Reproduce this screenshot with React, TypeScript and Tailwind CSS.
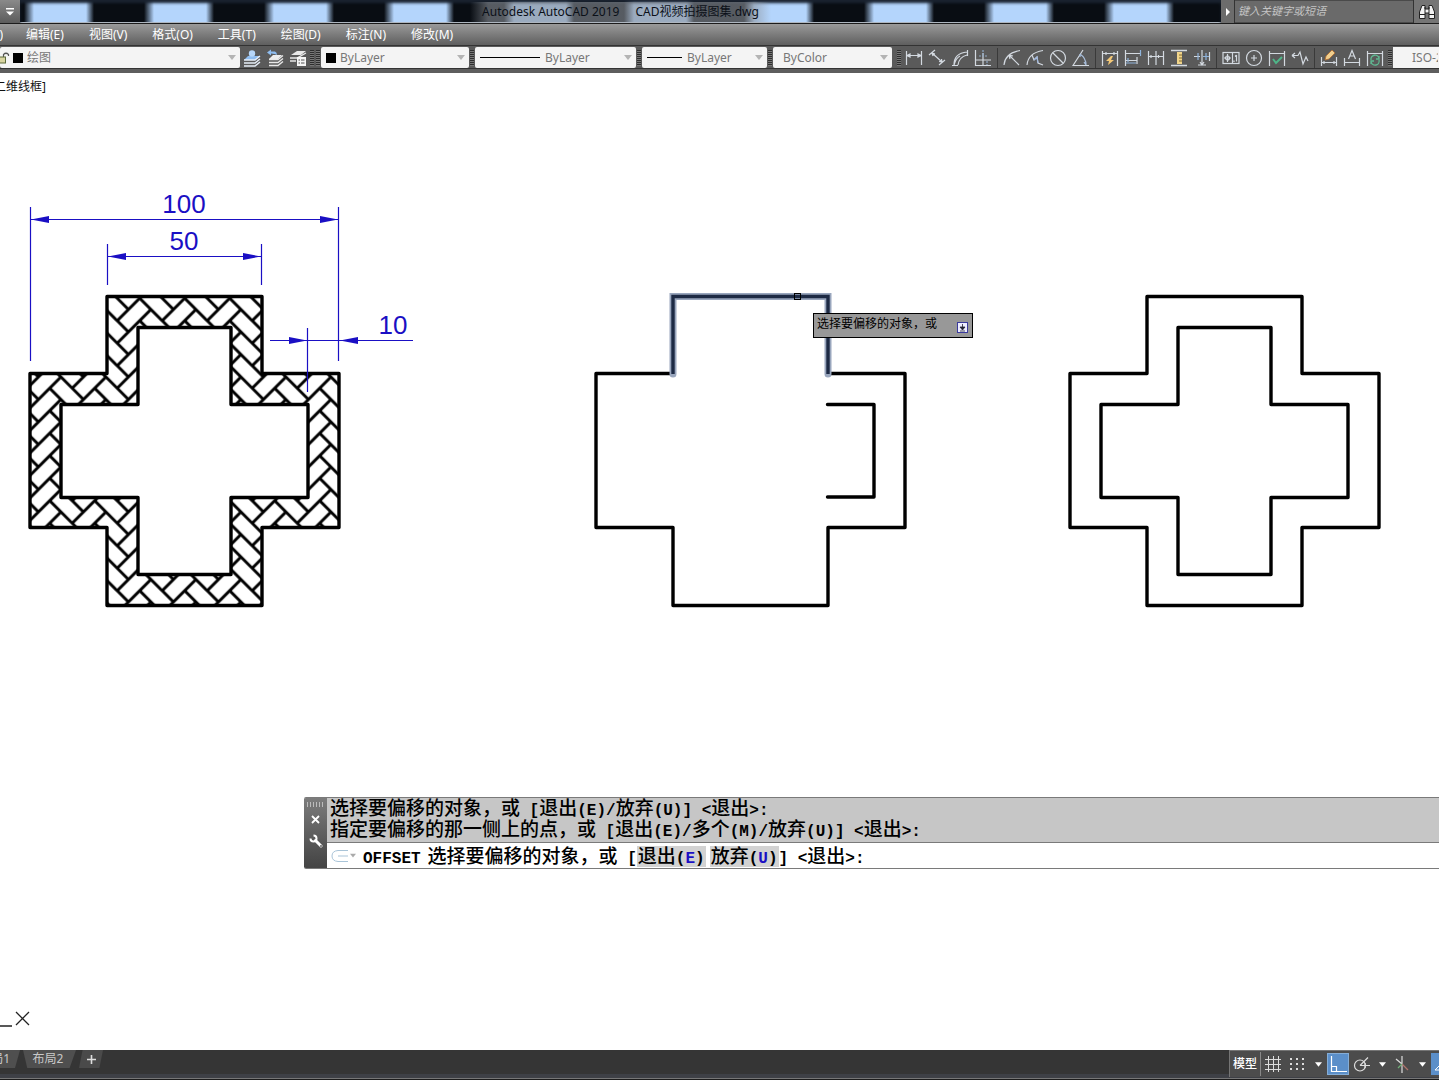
import React from "react";

const menus = ["编辑(E)", "视图(V)", "格式(O)", "工具(T)", "绘图(D)", "标注(N)", "修改(M)"];

const outer = "M77 0H232V77H309V231H232V309H77V231H0V77H77Z";
const inner = "M108 31H201V108H278V201H201V278H108V201H31V108H108Z";

const Icon = ({ children }: { children: React.ReactNode }) => (
  <svg
    width="18"
    height="18"
    viewBox="0 0 18 18"
    fill="none"
    stroke="#d3d9e0"
    strokeWidth="1.2"
    aria-hidden="true"
  >
    {children}
  </svg>
);

const ToolButton = ({ label, children }: { label: string; children: React.ReactNode }) => (
  <button aria-label={label} title={label} className="w-[23px] h-5 shrink-0 flex items-center justify-center">
    <Icon>{children}</Icon>
  </button>
);

const Arrow = ({ className }: { className: string }) => (
  <svg width="8" height="5" viewBox="0 0 8 5" className={className} aria-hidden="true">
    <path d="M0 0H8L4 5Z" fill="currentColor" />
  </svg>
);

const Grip = () => (
  <span className="w-1 h-4 mx-px shrink-0 bg-[repeating-linear-gradient(#2e2e2e_0_1px,#777_1px_2px)]" />
);

const Divider = () => <span className="w-px h-5 ml-[3px] mr-[2px] shrink-0 bg-[#8a8a8a] border-l border-[#3a3a3a]" />;

const Combo = ({
  label,
  value,
  className,
  children,
}: {
  label: string;
  value: string;
  className: string;
  children?: React.ReactNode;
}) => (
  <div className={`h-[21px] shrink-0 flex items-center bg-[#f4f4f4] rounded-xs text-[#777] ${className}`}>
    {children}
    <select aria-label={label} className="appearance-none flex-1 min-w-0 h-full leading-4 bg-transparent outline-none">
      <option>{value}</option>
    </select>
    <Arrow className="text-[#b4b4b4] mr-1" />
  </div>
);

// chinese glyphs and code characters use their own size so two latin columns equal one chinese column
const Cmd = ({ text }: { text: string }) => (
  <>
    {(text.match(/[\x20-\x7e]+|[^\x20-\x7e]+/g) ?? []).map((run, i) =>
      /[\x20-\x7e]/.test(run) ? (
        <span key={i} className="font-['Liberation_Mono',monospace] font-bold text-base leading-none whitespace-pre">
          {run}
        </span>
      ) : (
        <span key={i}>{run}</span>
      )
    )}
  </>
);

const CmdOption = ({ name, hotkey }: { name: string; hotkey: string }) => (
  <button className="h-[21px] px-px pb-[3px] bg-[#d2d2d2]">
    <Cmd text={`${name}(`} />
    <span className="font-['Liberation_Mono',monospace] font-bold text-base leading-none text-[#1a0fc4]">{hotkey}</span>
    <Cmd text=")" />
  </button>
);

const TitleBar = () => (
  <header className="h-6 flex items-stretch border-b border-[#1c1c1c] bg-[repeating-linear-gradient(90deg,#090d13_0_24px,#b4d5fc_34px_86px,#090d13_94px_120px)]">
    <button
      aria-label="自定义快速访问工具栏"
      className="w-5 flex items-center justify-center bg-linear-to-b from-[#8a8a8a] to-[#5c5c5c] text-white"
    >
      <svg width="8" height="8" viewBox="0 0 8 8" aria-hidden="true">
        <path d="M0 0H8V1.4H0ZM0 3.4H8L4 7.4Z" fill="currentColor" />
      </svg>
    </button>
    <div className="flex-1 flex justify-center items-center shadow-[inset_0_3px_3px_#1a2330,inset_0_-1px_0_#aeb6c0]">
      <h1 className="h-5 px-3 text-xs leading-5 text-[#0b1018] whitespace-pre bg-[linear-gradient(90deg,transparent,#8a8f9699_6%,#8a8f9699_94%,transparent)]">
        <span className="mr-4">Autodesk AutoCAD 2019</span>
        <span>CAD视频拍摄图集.dwg</span>
      </h1>
    </div>
    <div className="w-[218px] flex bg-[#6c6c6c]">
      <button aria-label="展开搜索" className="w-[14px] flex items-center justify-center border-r border-[#333]">
        <svg width="4" height="8" viewBox="0 0 4 8" aria-hidden="true">
          <path d="M0 0L4 4L0 8Z" fill="#fff" />
        </svg>
      </button>
      <input
        aria-label="搜索"
        placeholder="键入关键字或短语"
        className="flex-1 min-w-0 px-[3px] text-[11px] italic bg-[#6a6a6a] border-y border-[#4a4a4a] placeholder:text-[#c4c4c4] outline-none"
      />
      <button aria-label="查找" className="w-[26px] flex items-center justify-center border-l border-[#333] bg-[#757575]">
        <svg width="18" height="16" viewBox="0 0 18 16" fill="#f2f2f2" stroke="#222" aria-hidden="true">
          <path d="M4 1.5H7V5H11V1.5H14L16.5 8V14.5H11V9H7V14.5H1.5V8Z" />
          <path d="M2 10.500H7M11 10.500H16M7 3V9M11 3V9" />
        </svg>
      </button>
    </div>
  </header>
);

const MenuBar = () => (
  <nav className="h-[21px] flex items-center overflow-hidden bg-linear-to-b from-[#9a9a9a] to-[#5f5f5f] text-xs text-white">
    <button className="w-[3px] h-4 mr-[23px] leading-4 flex justify-end overflow-hidden whitespace-nowrap">
      文件(F)
    </button>
    {menus.map((item) => (
      <button key={item} className="h-4 mr-[25px] leading-4 whitespace-nowrap">
        {item}
      </button>
    ))}
  </nav>
);

const Swatch = () => <span className="w-[10px] h-[10px] bg-black mr-1" />;

const ToolBar = () => (
  <div className="h-7 flex items-start pt-px overflow-hidden bg-[#5a5a5a] border-t border-[#333] text-xs shadow-[inset_0_-4px_0_#5e5e5e,inset_0_-5px_0_#333]">
    <Combo label="图层" value="绘图" className="w-[240px]">
      <svg width="10" height="12" viewBox="0 0 10 12" className="mr-[3px]" fill="none" aria-hidden="true">
        <path d="M3.500 5V2.500Q6 0 8.500 2.500V4" stroke="#555" strokeWidth="1.200" />
        <rect x="-3" y="5" width="8.500" height="6" fill="#d8d4a0" stroke="#5c6b3a" />
      </svg>
      <Swatch />
    </Combo>
    <div className="flex h-[21px] items-center">
      <ToolButton label="将对象的图层置为当前">
        <path d="M5 7L17 7L12 11H1Z" fill="#8fbdf0" stroke="none" />
        <path d="M1 11H12L17 7M1 14H12L17 10M1 17H12L17 13" stroke="#e6eef8" strokeWidth="1.500" />
        <circle cx="9" cy="4.500" r="3.200" fill="#b6d6f8" stroke="none" />
      </ToolButton>
      <ToolButton label="上一个图层">
        <path d="M7 6H16L12 10H3Z" fill="#eee" stroke="none" />
        <path d="M3 10.500H12L17 6.500M3 13.500H12L17 9.500M3 16.500H12L17 12.500" stroke="#e8e8e8" strokeWidth="1.400" />
        <path d="M1 3.500L5 0.500V2.500H9Q11 3 11 6Q9 4.500 5 4.500V6.500Z" fill="#8fbdf0" stroke="none" />
      </ToolButton>
      <ToolButton label="图层状态管理器">
        <path d="M8 2H17L12 6H2Z" fill="#e8e8e8" stroke="none" />
        <path d="M1 9H8L17 4M1 12H7" stroke="#e8e8e8" strokeWidth="1.400" />
        <path d="M8 8H17V17H8Z" fill="#f5f5f5" stroke="none" />
        <path d="M9.500 11H11M12 11H15.500M9.500 14H11M12 14H15.500" stroke="#555" />
      </ToolButton>
    </div>
    <div className="flex h-[21px] items-center">
      <Grip />
      <Grip />
    </div>
    <Combo label="颜色" value="ByLayer" className="w-[148px] pl-[5px]">
      <Swatch />
    </Combo>
    <div className="flex h-[21px] items-center">
      <Grip />
    </div>
    <Combo label="线型" value="ByLayer" className="w-[161px] pl-[5px]">
      <span className="w-[60px] h-px bg-black mr-[5px]" />
    </Combo>
    <div className="flex h-[21px] items-center">
      <Grip />
    </div>
    <Combo label="线宽" value="ByLayer" className="w-[125px] pl-[5px]">
      <span className="w-[35px] h-px bg-black mr-[5px]" />
    </Combo>
    <div className="flex h-[21px] items-center">
      <Grip />
    </div>
    <Combo label="打印样式" value="ByColor" className="w-[119px] pl-[10px]" />
    <div className="flex h-[21px] items-center shrink-0">
      <span className="w-1" />
      <Grip />
      <ToolButton label="线性">
        <path d="M1.500 2V16M16.500 2V16M2 6.500H16M2 6.500L5 5V8ZM16 6.500L13 5V8Z" />
      </ToolButton>
      <ToolButton label="对齐">
        <path d="M1 6L7 1M11 16L17 11M4 4L14 13M4 4L5 7M4 4L7 5M14 13L11 12.500M14 13L13.500 10" />
      </ToolButton>
      <ToolButton label="弧长">
        <path d="M1 16.500H7M16.500 1V7M3 16Q3 4 16 3M7 16Q8 8 16 6M3 16Q5 9 9 7" />
      </ToolButton>
      <ToolButton label="坐标">
        <path d="M1.500 1V16.500H17M1.500 11H17M9 4V16" />
        <path d="M5 7H13M9 1V7M13 12V16" stroke="#8fa9c6" strokeDasharray="2 1" />
      </ToolButton>
      <Divider />
      <ToolButton label="半径">
        <path d="M1 16Q2 4 17 1.500M6 6L16 16M6 6L7 10M6 6L10 7" />
      </ToolButton>
      <ToolButton label="折弯">
        <path d="M1 16Q2 4 17 1.500M6 6L8 11L11 8L12 14L17 16" />
        <path d="M8 11L11 8L12 14" stroke="#9fb8e0" />
      </ToolButton>
      <ToolButton label="直径">
        <circle cx="9" cy="9" r="7.500" />
        <path d="M4 4L14 14" />
      </ToolButton>
      <ToolButton label="角度">
        <path d="M11 1L1 16.500H17" />
        <path d="M8 5Q14 9 14 16M8 5V8M14 16L12 13" stroke="#a9bfdc" />
      </ToolButton>
      <Divider />
      <ToolButton label="快速标注">
        <path d="M1.500 2V17M16.500 2V17M2 4.500H16M5 3V6M13 3V6" />
        <path d="M10 7L5 12H8L7 16L13 11H10L12 7Z" fill="#f3c877" stroke="none" />
      </ToolButton>
      <ToolButton label="基线">
        <path d="M1.500 1V17M2 4.500H16.500M2 11.500H13M13 8V15" />
        <path d="M16.500 1V7M2 14H12M4 9V13" stroke="#8fb4dc" />
      </ToolButton>
      <ToolButton label="连续">
        <path d="M1.500 2V16M9 2V16M16.500 2V16M2 7.500H16M4 6V9M11.500 6V9" />
      </ToolButton>
      <ToolButton label="等距标注">
        <path d="M1 1.500H17M1 16.500H17" strokeWidth="1.500" />
        <rect x="7" y="3" width="5" height="12" fill="#f0d48a" stroke="none" />
        <path d="M9 6H12M9 9H12M9 12H12" stroke="#806a30" />
      </ToolButton>
      <ToolButton label="折断标注">
        <path d="M1 7.500H7M9 1V16M5 16H13M7 13L9 16L11 13M16.500 3V12" />
        <path d="M10 7.500H16M13 4V11M5 4V11" stroke="#8fb4dc" />
      </ToolButton>
      <Divider />
      <ToolButton label="公差">
        <rect x="1" y="3.500" width="16" height="11" />
        <path d="M10.500 4V14M2 9H9M5.500 5V13M14.500 6V12.500M13 7.500L14.500 6M12 11.500V13" />
        <circle cx="5.500" cy="9" r="2" />
      </ToolButton>
      <ToolButton label="圆心标记">
        <circle cx="9" cy="9" r="7.500" />
        <path d="M9 6V12M6 9H12" />
      </ToolButton>
      <ToolButton label="检验">
        <path d="M1.500 2V17M16.500 2V17M2 4.500H16" />
        <path d="M5 10L8 14L14 8" stroke="#4fb588" strokeWidth="2" />
      </ToolButton>
      <ToolButton label="折弯线性">
        <path d="M1 6.500H7L9 3L12 15L15 8L17 12M1 6.500L4 4M1 6.500L4 9" />
      </ToolButton>
      <Divider />
      <ToolButton label="编辑标注">
        <path d="M1.500 8V17M16.500 8V17M2 13.500H16M4 12V15M14 12V15" />
        <path d="M5 11L6 7L12 1L15 4L9 10Z" fill="#f0cf8e" stroke="#b06b2e" strokeWidth="0.800" />
      </ToolButton>
      <ToolButton label="编辑标注文字">
        <path d="M1.500 9V17M16.500 9V17M2 13.500H16M5.500 10L9 1.500L12.500 10M7 7H11" />
      </ToolButton>
      <ToolButton label="标注更新">
        <path d="M1.500 2V17M16.500 2V17M2 4.500H16" />
        <path d="M5 11A4 4 0 0 1 13 9.500M13 11A4 4 0 0 1 5 13M13 7V10H10M5 15V12H8" stroke="#5fba92" strokeWidth="1.300" />
      </ToolButton>
      <span className="w-px" />
      <Grip />
    </div>
    <div className="flex-1 min-w-0 h-[21px] pl-[19px] pr-px overflow-hidden bg-[#f4f4f4] text-[#777]">
      <select aria-label="标注样式" className="appearance-none w-full h-full leading-4 bg-transparent outline-none">
        <option>ISO-25</option>
      </select>
    </div>
  </div>
);

const ArrowHead = ({ x, y, dir }: { x: number; y: number; dir: 1 | -1 }) => (
  <path d={`M${x} ${y}l${18 * dir} -3.500v7z`} fill="#1a0fc4" stroke="none" />
);

const Drawing = () => (
  <svg className="absolute inset-0 w-full h-full" fill="none" aria-label="十字图形">
    <defs>
      <pattern id="hbone" patternUnits="userSpaceOnUse" width="45" height="45" patternTransform="translate(117.200 320.700)">
        <g stroke="#000" strokeWidth="3">
          {[-1, 0, 1].map((col) =>
            [-1, 0, 1, 2, 3, 4].map((row) => (
              <path
                key={`${col}/${row}`}
                d={`M${col * 45} ${row * 22.5}l33.750 -33.750M${col * 45 + 11.25} ${row * 22.5 - 11.25}l-33.750 -33.750`}
              />
            ))
          )}
        </g>
      </pattern>
    </defs>
    <g transform="translate(0 -73)">
      <path
        d="M107.500 296.500H262V373.500H339V527.500H262V605H107.500V527.500H30V373.500H107.500ZM138.500 327.500V404.500H61V497H138.500V574.500H231V497H308V404.500H231V327.500Z"
        fill="url(#hbone)"
        fillRule="evenodd"
      />
      <g stroke="#000" strokeWidth="3.400" strokeLinejoin="round" strokeLinecap="round">
        <path transform="translate(30 296.500)" d={outer + inner} />
        <path transform="translate(596 296.500)" d={outer} />
        <path d="M827.500 404.500H874V497H827.500" />
        <path transform="translate(1070 296.500)" d={outer + inner} />
      </g>

      {/* highlighted segment under the pick box */}
      <path d="M673 374V296.500H828V374" stroke="#99a6bd" strokeWidth="7" strokeLinecap="round" />
      <path d="M673 374V296.500H828V374" stroke="#1d2a44" strokeWidth="3.400" />
      <rect x="794.500" y="293.500" width="6" height="6" stroke="#000" />

      <g stroke="#1a0fc4" strokeWidth="1.200">
        <path d="M30.500 207V361M338.500 207V361M30 219.500H339" />
        <path d="M107.500 244V285M261.500 244V285M107 256.500H262" />
        <path d="M307.500 328V392M270 340.500H413" />
        <ArrowHead x={31} y={219.5} dir={1} />
        <ArrowHead x={338} y={219.5} dir={-1} />
        <ArrowHead x={108} y={256.5} dir={1} />
        <ArrowHead x={261} y={256.5} dir={-1} />
        <ArrowHead x={307} y={340.5} dir={-1} />
        <ArrowHead x={340} y={340.5} dir={1} />
      </g>
      <g className="font-['Liberation_Sans',sans-serif] text-[26px]" fill="#1a0fc4" textAnchor="middle">
        <text x="184" y="213">100</text>
        <text x="184" y="250">50</text>
        <text x="393" y="334">10</text>
      </g>

      <path d="M0 1026H12M16 1012L29 1025M29 1012L16 1025" stroke="#222" strokeWidth="1.300" />
    </g>
  </svg>
);

const CommandLine = () => (
  <section
    aria-label="命令行"
    className="absolute left-[304px] right-0 bottom-[181px] h-[72px] flex border-y border-[#7a7a7a] bg-white rounded-l-xs overflow-hidden font-['Noto_Sans_CJK_SC',sans-serif] font-medium text-[19px] leading-[18px] text-black"
  >
    <div className="w-[23px] shrink-0 flex flex-col items-center bg-linear-to-b from-[#7c7c7c] to-[#444] text-white">
      <span className="w-[18px] h-[5px] mt-1 bg-[repeating-linear-gradient(90deg,#bbb_0_1px,transparent_1px_3px)]" />
      <button aria-label="关闭" className="mt-2 leading-none">
        <svg width="9" height="9" viewBox="0 0 9 9" stroke="currentColor" strokeWidth="1.800" aria-hidden="true">
          <path d="M1 1L8 8M8 1L1 8" />
        </svg>
      </button>
      <button aria-label="自定义" className="mt-[10px] leading-none">
        <svg width="14" height="14" viewBox="0 0 14 14" fill="none" stroke="currentColor" aria-hidden="true">
          <path d="M6.500 6.500L12 12" strokeWidth="3" strokeLinecap="round" />
          <path d="M4.500 1.500A3 3 0 1 1 1.500 4.500" strokeWidth="2" />
          <circle cx="12" cy="12" r="0.600" stroke="#555" />
        </svg>
      </button>
    </div>
    <div className="flex-1 min-w-0 flex flex-col whitespace-nowrap">
      <div className="h-[45px] pl-[3px] bg-[#c6c6c6] border-b border-[#7a7a7a]">
        <p className="h-[21px]">
          <Cmd text="选择要偏移的对象，或 [退出(E)/放弃(U)] <退出>:" />
        </p>
        <p className="h-[21px]">
          <Cmd text="指定要偏移的那一侧上的点，或 [退出(E)/多个(M)/放弃(U)] <退出>:" />
        </p>
      </div>
      <div className="flex-1 flex items-center pl-1">
        <button aria-label="最近使用的命令" className="flex items-center gap-px w-8">
          <svg width="18" height="12" viewBox="0 0 18 12" fill="none" stroke="#a9c4d8" aria-hidden="true">
            <path d="M17 0.500H7Q1 1 1 6Q1 11 7 11.500H17M7 6H17" />
          </svg>
          <Arrow className="w-[6px] text-[#aaa]" />
        </button>
        <div className="flex-1 min-w-0 h-[21px] flex items-baseline">
          <label htmlFor="command" className="mr-[7px] font-['Liberation_Mono',monospace] font-bold text-base leading-none">
            OFFSET
          </label>
          <Cmd text="选择要偏移的对象，或 [" />
          <CmdOption name="退出" hotkey="E" />
          <span className="w-1" />
          <CmdOption name="放弃" hotkey="U" />
          <Cmd text="] <退出>:" />
          <input id="command" className="flex-1 min-w-0 h-[18px] outline-none" />
        </div>
      </div>
    </div>
  </section>
);

const StatusBar = () => (
  <footer className="h-[30px] flex items-stretch justify-between bg-[#353535] text-xs text-[#c8c8c8] border-b border-[#1c1c1c] shadow-[inset_0_-1px_0_#777,inset_0_-5px_0_#3e4046]">
    <div className="flex items-start gap-[3px]">
      <button className="w-5 h-[18px] pr-[10px] leading-[18px] flex justify-end overflow-hidden whitespace-nowrap bg-[#4f4f4f] [clip-path:polygon(0_0,100%_0,75%_100%,0_100%)]">
        <span className="shrink-0">布局1</span>
      </button>
      <button className="w-[53px] h-[18px] pr-[3px] leading-[18px] bg-[#4f4f4f] [clip-path:polygon(0_0,100%_0,88%_100%,8%_100%)]">
        布局2
      </button>
      <button
        aria-label="新建布局"
        className="w-6 h-[18px] flex items-center justify-center bg-[#4a4a4a] [clip-path:polygon(15%_0,100%_0,85%_100%,0_100%)]"
      >
        <svg width="9" height="9" viewBox="0 0 9 9" stroke="#ddd" strokeWidth="1.600" aria-hidden="true">
          <path d="M4.500 0V9M0 4.500H9" />
        </svg>
      </button>
    </div>
    <div className="h-[27px] w-[210px] flex items-center overflow-hidden bg-[#4c4c4c] border-l border-t border-[#757575] text-white">
      <button className="w-[31px] h-6 shrink-0 border-r border-[#888] font-medium">模型</button>
      <button aria-label="栅格" className="w-6 shrink-0 flex justify-center">
        <svg width="16" height="16" viewBox="0 0 16 16" stroke="#ddd" aria-hidden="true">
          <path d="M3.500 0V16M8.500 0V16M13.500 0V16M0 3.500H16M0 8.500H16M0 13.500H16" />
        </svg>
      </button>
      <button aria-label="捕捉" className="w-6 shrink-0 flex justify-center">
        <svg width="14" height="14" viewBox="0 0 14 14" stroke="#ddd" strokeWidth="2" strokeDasharray="2 4" aria-hidden="true">
          <path d="M0 2H14M0 7H14M0 12H14" />
        </svg>
      </button>
      <button aria-label="捕捉设置" className="w-[18px] shrink-0 flex justify-center">
        <Arrow className="w-[7px]" />
      </button>
      <button aria-label="正交" className="w-[22px] h-[22px] shrink-0 flex items-center justify-center bg-[#5b8fc9] border border-[#85add6]">
        <svg width="17" height="17" viewBox="0 0 17 17" fill="none" stroke="#fff" strokeWidth="1.200" aria-hidden="true">
          <path d="M1.500 0V15.500H17M1.500 10.500H6.500V15.500" />
        </svg>
      </button>
      <button aria-label="极轴追踪" className="w-6 shrink-0 flex justify-center">
        <svg width="17" height="17" viewBox="0 0 17 17" fill="none" stroke="#ddd" strokeWidth="1.200" aria-hidden="true">
          <circle cx="7" cy="9.500" r="5.500" />
          <path d="M7 9.500H17M7 9.500L15 1.500M12 7V12" />
        </svg>
      </button>
      <button aria-label="极轴设置" className="w-[18px] shrink-0 flex justify-center">
        <Arrow className="w-[7px]" />
      </button>
      <button aria-label="等轴测" className="w-[22px] shrink-0 flex justify-center">
        <svg width="16" height="17" viewBox="0 0 16 17" fill="none" strokeWidth="1.200" aria-hidden="true">
          <path d="M8 0V17M2 3L8 8" stroke="#ddd" />
          <path d="M8 8L14 14" stroke="#b0746c" />
          <path d="M8 8L4 12" stroke="#6fae76" />
        </svg>
      </button>
      <button aria-label="等轴测设置" className="w-[18px] shrink-0 flex justify-center">
        <Arrow className="w-[7px]" />
      </button>
      <button aria-label="对象捕捉追踪" className="w-[22px] h-[22px] shrink-0 flex items-center justify-center bg-[#5b8fc9]">
        <svg width="17" height="17" viewBox="0 0 17 17" fill="none" stroke="#fff" aria-hidden="true">
          <path d="M1 14H15M1 14L12 3" />
        </svg>
      </button>
    </div>
  </footer>
);

const App = () => {
  return (
    <div className="min-h-screen flex flex-col bg-white font-['Noto_Sans','Noto_Sans_CJK_SC',sans-serif] overflow-hidden">
      <TitleBar />
      <MenuBar />
      <ToolBar />
      <main className="relative flex-1 min-h-[900px] overflow-hidden">
        <div className="w-[46px] mt-1 h-5 flex justify-end overflow-hidden">
          <button className="shrink-0 text-xs leading-5 text-[#111] whitespace-nowrap">[二维线框]</button>
        </div>
        <Drawing />
        <div className="absolute left-[813px] top-[240px] w-[160px] h-[25px] pl-[3px] pr-1 flex items-center justify-between bg-[#989898] border border-black text-xs text-black">
          <span className="leading-4 pb-[3px]">选择要偏移的对象，或</span>
          <svg width="11" height="11" viewBox="0 0 11 11" className="mt-1" aria-hidden="true">
            <rect x="0.500" y="0.500" width="10" height="10" fill="#eef" stroke="#3a3a9c" />
            <path d="M5.500 2V7M3 5L5.500 8L8 5ZM3 9H8" stroke="#223" fill="#223" strokeWidth="0.800" />
          </svg>
        </div>
        <CommandLine />
      </main>
      <StatusBar />
    </div>
  );
};

export default App;
